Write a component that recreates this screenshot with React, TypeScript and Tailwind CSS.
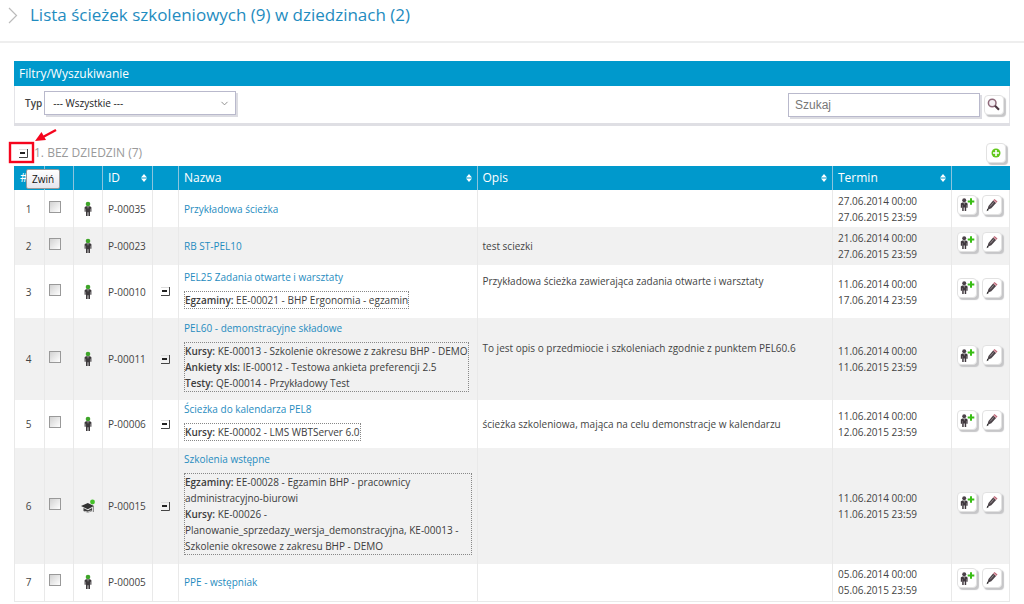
import { useState } from "react";
import type { ReactNode } from "react";
import { ChevronDown } from "lucide-react";

type Part = { label: string; text: string };

type Path = {
    id: string;
    name: string;
    height: string;
    icon: "person" | "cap";
    parts?: Part[];
    description?: string;
    descriptionClass?: string;
    from: string;
    to: string;
};

const paths: Path[] = [
    { id: "P-00035", name: "Przykładowa ścieżka", height: "h-[37px]", icon: "person", from: "27.06.2014 00:00", to: "27.06.2015 23:59" },
    { id: "P-00023", name: "RB ST-PEL10", height: "h-[38px]", icon: "person", description: "test sciezki", from: "21.06.2014 00:00", to: "27.06.2015 23:59" },
    {
        id: "P-00010",
        name: "PEL25 Zadania otwarte i warsztaty",
        height: "h-[53px]",
        icon: "person",
        parts: [{ label: "Egzaminy:", text: "EE-00021 - BHP Ergonomia - egzamin" }],
        description: "Przykładowa ścieżka zawierająca zadania otwarte i warsztaty",
        descriptionClass: "pb-[22px]",
        from: "11.06.2014 00:00",
        to: "17.06.2014 23:59",
    },
    {
        id: "P-00011",
        name: "PEL60 - demonstracyjne składowe",
        height: "h-[82px]",
        icon: "person",
        parts: [
            { label: "Kursy:", text: "KE-00013 - Szkolenie okresowe z zakresu BHP - DEMO" },
            { label: "Ankiety xls:", text: "IE-00012 - Testowa ankieta preferencji 2.5" },
            { label: "Testy:", text: "QE-00014 - Przykładowy Test" },
        ],
        description: "To jest opis o przedmiocie i szkoleniach zgodnie z punktem PEL60.6",
        descriptionClass: "pb-[22px]",
        from: "11.06.2014 00:00",
        to: "11.06.2015 23:59",
    },
    {
        id: "P-00006",
        name: "Ścieżka do kalendarza PEL8",
        height: "h-[48px]",
        icon: "person",
        parts: [{ label: "Kursy:", text: "KE-00002 - LMS WBTServer 6.0" }],
        description: "ścieżka szkoleniowa, mająca na celu demonstracje w kalendarzu",
        from: "11.06.2014 00:00",
        to: "12.06.2015 23:59",
    },
    {
        id: "P-00015",
        name: "Szkolenia wstępne",
        height: "h-[116px]",
        icon: "cap",
        parts: [
            { label: "Egzaminy:", text: "EE-00028 - Egzamin BHP - pracownicy administracyjno-biurowi" },
            { label: "Kursy:", text: "KE-00026 - Planowanie_sprzedazy_wersja_demonstracyjna, KE-00013 - Szkolenie okresowe z zakresu BHP - DEMO" },
        ],
        from: "11.06.2014 00:00",
        to: "11.06.2015 23:59",
    },
    { id: "P-00005", name: "PPE - wstępniak", height: "h-[37px]", icon: "person", from: "05.06.2014 00:00", to: "05.06.2015 23:59" },
];

function PersonIcon() {
    return (
        <svg width="8" height="16" viewBox="0 0 8 16" className="mx-auto block">
            <circle cx="4" cy="3" r="2.3" fill="#3fa52a" />
            <path d="M2 5.3h4l1.4 1v4.5H6.3V7.8H6V15H4.4v-3.8h-.8V15H2V7.8h-.3v3H.6V6.3z" fill="#3d393c" />
            <path d="M3.2 5.3h1.6L4 8z" fill="#999" />
        </svg>
    );
}

function CapIcon() {
    return (
        <svg width="14" height="15" viewBox="0 0 14 15" className="mx-auto block">
            <path d="M0 7 6.8 4 13 7l-6.2 3.3z" fill="#333" />
            <path d="M2.5 9 7 11.3 11 9v3Q7 14.8 2.5 12z" fill="#3c3c3c" />
            <path d="M12.3 7v6" stroke="#777" strokeWidth="1" />
            <path d="M3.5 12.4q3 1.6 7-.7" stroke="#ccc" fill="none" />
            <circle cx="11.5" cy="3" r="2.4" fill="#45c02a" />
        </svg>
    );
}

function AddPersonIcon() {
    return (
        <svg width="15" height="15" viewBox="0 0 15 15">
            <circle cx="4.2" cy="3.2" r="2" fill="#4b4149" />
            <path d="M2.2 5.6h4l1.4.9v4.2H6.4V8H6.2v6H4.7v-3.5h-1V14H2.2V8H2v2.7H.8V6.5z" fill="#40383e" />
            <path d="M3.5 5.6h1.4L4.2 8z" fill="#aaa" />
            <path d="M11 1.2v6.6M7.7 4.5h6.6" stroke="#38bd14" strokeWidth="2" />
        </svg>
    );
}

function PenIcon() {
    return (
        <svg width="14" height="14" viewBox="0 0 14 14">
            <path d="M2.3 12l1.2-4 4.6-5.6 3 2.5-4.8 5.3z" fill="#4b4348" />
            <path d="M8.1 2.6l1.4-1.5 3 2.4-1.4 1.6z" fill="#bd6475" />
            <path d="M8.8 2.2l2.8 2.3" stroke="#ead2d6" strokeWidth=".6" />
            <path d="M5.2 8.4l3.4-4" stroke="#a9a0a5" strokeWidth=".8" />
            <path d="M1.6 13.3l.7-2.5 1.5 1.2z" fill="#222" />
        </svg>
    );
}

function SearchIcon() {
    return (
        <svg width="14" height="14" viewBox="0 0 14 14">
            <circle cx="5.2" cy="5" r="3.8" fill="#f3eef3" stroke="#8f6a7a" strokeWidth="1.5" />
            <path d="M8 7.8l4 4" stroke="#4a3540" strokeWidth="2.2" />
        </svg>
    );
}

function PlusIcon() {
    return (
        <svg width="10" height="10" viewBox="0 0 10 10">
            <circle cx="5" cy="5" r="4.5" fill="#62c81c" />
            <path d="M5 2v6M2 5h6" stroke="#fff" strokeWidth="1.6" />
        </svg>
    );
}

function CollapseIcon() {
    return (
        <svg width="9" height="9" viewBox="0 0 9 9" className="block">
            <path d="M0 .5h8" stroke="#ddd" />
            <path d="M1 4h5" stroke="#222" strokeWidth="2" />
            <path d="M8.5 0v8.5H0" stroke="#444" fill="none" />
        </svg>
    );
}

function SortIcon() {
    return (
        <svg width="6" height="8" viewBox="0 0 6 8">
            <path d="M3 0l3 3.4H0zM3 8L0 4.6h6z" fill="#fff" />
        </svg>
    );
}

function IconButton({ label, children }: { label: string; children: ReactNode }) {
    return (
        <button
            type="button"
            aria-label={label}
            className="flex size-5 shrink-0 items-center justify-center rounded-sm border border-[#e2e2e2] bg-white shadow-[2px_2px_1px_#c6c6c8]"
        >
            {children}
        </button>
    );
}

function HeadCell({ title, sortable = false }: { title?: string; sortable?: boolean }) {
    return (
        <th className="border-l border-[#8cc4dd] px-[5px] text-left font-normal first:border-[#0099cc]">
            <div className="flex items-center justify-between">
                <span>{title}</span>
                {sortable && <SortIcon />}
            </div>
        </th>
    );
}

function PathRow({ path, index }: { path: Path; index: number }) {
    const [open, setOpen] = useState(true);
    return (
        <tr className={`${path.height} even:bg-[#f1f1f1] [&>td]:border-l [&>td]:border-[#e9e9e9]`}>
            <td className="pr-0.5 text-center">{index}</td>
            <td className="px-1 pb-1">
                <input
                    type="checkbox"
                    aria-label={`Zaznacz ${path.id}`}
                    className="block size-3 appearance-none border border-[#999] bg-linear-to-br from-[#d2d2d2] to-white checked:bg-[#0099cc]"
                />
            </td>
            <td>{path.icon === "cap" ? <CapIcon /> : <PersonIcon />}</td>
            <td className="px-[5px]">{path.id}</td>
            <td>
                {path.parts && (
                    <button type="button" aria-label="Zwiń" onClick={() => setOpen(!open)} className="mx-auto block">
                        <CollapseIcon />
                    </button>
                )}
            </td>
            <td className={path.parts ? "px-[5px] pb-1.5" : "px-[5px]"}>
                <a href="#" className="text-[#1f8cc0]">{path.name}</a>
                {path.parts && open && (
                    <div className="mt-1.5 w-fit border border-dotted border-[#888] text-[#3c3c3c]">
                        {path.parts.map((part) => (
                            <p key={part.label}>
                                <b className="font-semibold">{part.label}</b> {part.text}
                            </p>
                        ))}
                    </div>
                )}
            </td>
            <td className={`px-[5px] ${path.descriptionClass ?? ""}`}>{path.description}</td>
            <td className="px-[5px]">
                <p>{path.from}</p>
                <p>{path.to}</p>
            </td>
            <td className="border-r px-[5px] pb-2">
                <div className="flex gap-[5px]">
                    <IconButton label="Dodaj uczestnika"><AddPersonIcon /></IconButton>
                    <IconButton label="Edytuj"><PenIcon /></IconButton>
                </div>
            </td>
        </tr>
    );
}

export default function App() {
    return (
        <div className="bg-white pb-0.5 font-['Open_Sans','Noto_Sans',sans-serif] text-[10px] leading-4 text-[#444]">
            <header className="flex h-[43px] items-start gap-3 border-b-2 border-[#eee] px-2 pt-[3px]">
                <svg width="10" height="17" viewBox="0 0 10 17" className="mt-1">
                    <path d="M1 1l7.5 7.5L1 16" fill="none" stroke="#bbb" strokeWidth="1.2" />
                </svg>
                <h1 className="text-[17px] leading-6 text-[#1f8cc0]">Lista ścieżek szkoleniowych (9) w dziedzinach (2)</h1>
            </header>

            <main className="px-3.5 pt-[18px]">
                <section className="border-b-[3px] border-[#dfdfe4]">
                    <h2 className="bg-[#0099cc] px-[5px] text-xs leading-[25px] text-white">Filtry/Wyszukiwanie</h2>
                    <div className="flex h-[37px] items-center justify-between border-x border-[#e4e4e8] px-[5px]">
                        <div className="flex items-center gap-0.5 pb-[3px] pl-[5px]">
                            <label htmlFor="type" className="font-semibold">Typ</label>
                            <div className="relative">
                                <select
                                    id="type"
                                    className="block h-6 w-48 appearance-none border border-[#b9b9cc] bg-white px-2 text-[10px] text-[#222] shadow-[2px_2px_0_#dcdce2]"
                                >
                                    <option>--- Wszystkie ---</option>
                                </select>
                                <ChevronDown size={11} strokeWidth={2} className="pointer-events-none absolute top-[7px] right-1.5 text-[#888]" />
                            </div>
                        </div>
                        <div className="flex items-center gap-1">
                            <input
                                type="text"
                                aria-label="Szukaj"
                                placeholder="Szukaj"
                                className="h-6 w-48 border border-[#b9b9cc] px-1.5 font-['Liberation_Sans',sans-serif] text-xs shadow-[2px_2px_0_#dcdce2] placeholder:text-[#777]"
                            />
                            <IconButton label="Szukaj"><SearchIcon /></IconButton>
                        </div>
                    </div>
                </section>

                <section>
                    <div className="relative flex h-10 items-end justify-between pr-1 pb-[3px] pl-[5px]">
                        <div className="flex items-center gap-1.5 text-xs leading-5 text-[#999]">
                            <button type="button" aria-label="Zwiń"><CollapseIcon /></button>
                            <h2>1. BEZ DZIEDZIN (7)</h2>
                        </div>
                        <IconButton label="Dodaj ścieżkę"><PlusIcon /></IconButton>

                        {/* callout marking the collapse button */}
                        <svg width="54" height="36" viewBox="0 0 54 36" className="pointer-events-none absolute top-0.5 -left-1.5">
                            <rect x="2" y="15" width="23" height="19" fill="none" stroke="#f5051d" strokeWidth="2.4" />
                            <path d="M48 2L35 9" stroke="#f5051d" strokeWidth="2.4" />
                            <path d="M27 13l6.5-9 4.5 8z" fill="#f5051d" />
                        </svg>
                        <span
                            role="tooltip"
                            className="absolute top-[43px] left-3 rounded-xs border border-[#999] bg-linear-to-b from-white to-[#e6e6ee] px-[5px] leading-[18px] text-[#111]"
                        >
                            Zwiń
                        </span>
                    </div>

                    <table className="w-full table-fixed border-collapse border-b border-[#e9e9e9]">
                        <colgroup>
                            <col className="w-[30px]" />
                            <col className="w-[29px]" />
                            <col className="w-[29px]" />
                            <col className="w-[50px]" />
                            <col className="w-[26px]" />
                            <col className="w-[30%]" />
                            <col />
                            <col className="w-[119px]" />
                            <col className="w-[58px]" />
                        </colgroup>
                        <thead>
                            <tr className="h-6 bg-[#0099cc] text-xs text-white">
                                <HeadCell title="#" />
                                <HeadCell />
                                <HeadCell />
                                <HeadCell title="ID" sortable />
                                <HeadCell />
                                <HeadCell title="Nazwa" sortable />
                                <HeadCell title="Opis" sortable />
                                <HeadCell title="Termin" sortable />
                                <HeadCell />
                            </tr>
                        </thead>
                        <tbody>
                            {paths.map((path, i) => (
                                <PathRow key={path.id} path={path} index={i + 1} />
                            ))}
                        </tbody>
                    </table>
                </section>
            </main>
        </div>
    );
}
